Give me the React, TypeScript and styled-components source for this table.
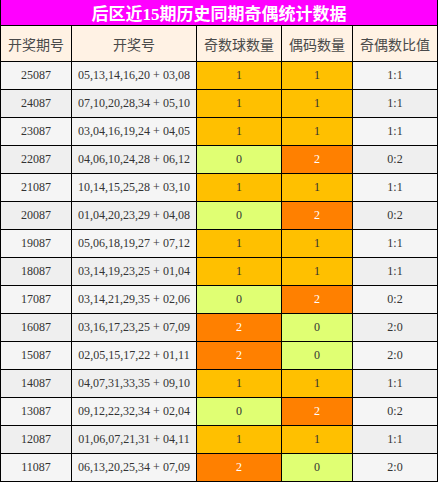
import React from 'react';
import styled, { createGlobalStyle } from 'styled-components';

type Row = [string, string, number, number];

const ROWS: Row[] = [
  ['25087', '05,13,14,16,20 + 03,08', 1, 1],
  ['24087', '07,10,20,28,34 + 05,10', 1, 1],
  ['23087', '03,04,16,19,24 + 04,05', 1, 1],
  ['22087', '04,06,10,24,28 + 06,12', 0, 2],
  ['21087', '10,14,15,25,28 + 03,10', 1, 1],
  ['20087', '01,04,20,23,29 + 04,08', 0, 2],
  ['19087', '05,06,18,19,27 + 07,12', 1, 1],
  ['18087', '03,14,19,23,25 + 01,04', 1, 1],
  ['17087', '03,14,21,29,35 + 02,06', 0, 2],
  ['16087', '03,16,17,23,25 + 07,09', 2, 0],
  ['15087', '02,05,15,17,22 + 01,11', 2, 0],
  ['14087', '04,07,31,33,35 + 09,10', 1, 1],
  ['13087', '09,12,22,32,34 + 02,04', 0, 2],
  ['12087', '01,06,07,21,31 + 04,11', 1, 1],
  ['11087', '06,13,20,25,34 + 07,09', 2, 0],
];

const HEADERS = ['开奖期号', '开奖号', '奇数球数量', '偶码数量', '奇偶数比值'];

const GlobalStyle = createGlobalStyle`
  html, body {
    margin: 0;
    padding: 0;
    background: #fff;
  }
`;

const Table = styled.div`
  display: grid;
  grid-template-columns: 70px 124px 84px 70px 84px;
  grid-template-rows: 25px 35px;
  grid-auto-rows: 27px;
  gap: 1px;
  width: 436px;
  background: #000;
  border: 1px solid #000;
  border-top: none;
`;

const Title = styled.div`
  grid-column: 1 / -1;
  display: flex;
  align-items: center;
  justify-content: center;
  background: #ff00ff;
  color: #fff;
  font-family: "Liberation Serif", "Noto Sans CJK SC", serif;
  font-weight: bold;
  font-size: 17px;
`;

const HeadCell = styled.div`
  display: flex;
  align-items: center;
  justify-content: center;
  background: #fff2e4;
  color: #4a4a4a;
  font-family: "Noto Sans CJK SC", "Noto Sans", sans-serif;
  font-size: 14px;
`;

const Cell = styled.div<{ $even: boolean }>`
  display: flex;
  align-items: center;
  justify-content: center;
  background: ${({ $even }) => ($even ? '#efefef' : '#f5f5f5')};
  color: #333;
  font-family: "Liberation Serif", "Times New Roman", serif;
  font-size: 12px;
`;

const COUNT_BG = ['#e0ff73', '#ffc000', '#ff8000'];

const CountCell = styled.div<{ $n: number }>`
  display: flex;
  align-items: center;
  justify-content: center;
  background: ${({ $n }) => COUNT_BG[$n]};
  color: ${({ $n }) => ($n === 2 ? '#fff' : '#333')};
  font-family: "Liberation Serif", "Times New Roman", serif;
  font-size: 12px;
`;

const App = () => (
  <>
    <GlobalStyle />
    <Table>
      <Title>后区近15期历史同期奇偶统计数据</Title>
      {HEADERS.map((h) => (
        <HeadCell key={h}>{h}</HeadCell>
      ))}
      {ROWS.map(([issue, nums, odd, even], i) => (
        <React.Fragment key={issue}>
          <Cell $even={i % 2 === 1}>{issue}</Cell>
          <Cell $even={i % 2 === 1}>{nums}</Cell>
          <CountCell $n={odd}>{odd}</CountCell>
          <CountCell $n={even}>{even}</CountCell>
          <Cell $even={i % 2 === 1}>{`${odd}:${even}`}</Cell>
        </React.Fragment>
      ))}
    </Table>
  </>
);

export default App;
